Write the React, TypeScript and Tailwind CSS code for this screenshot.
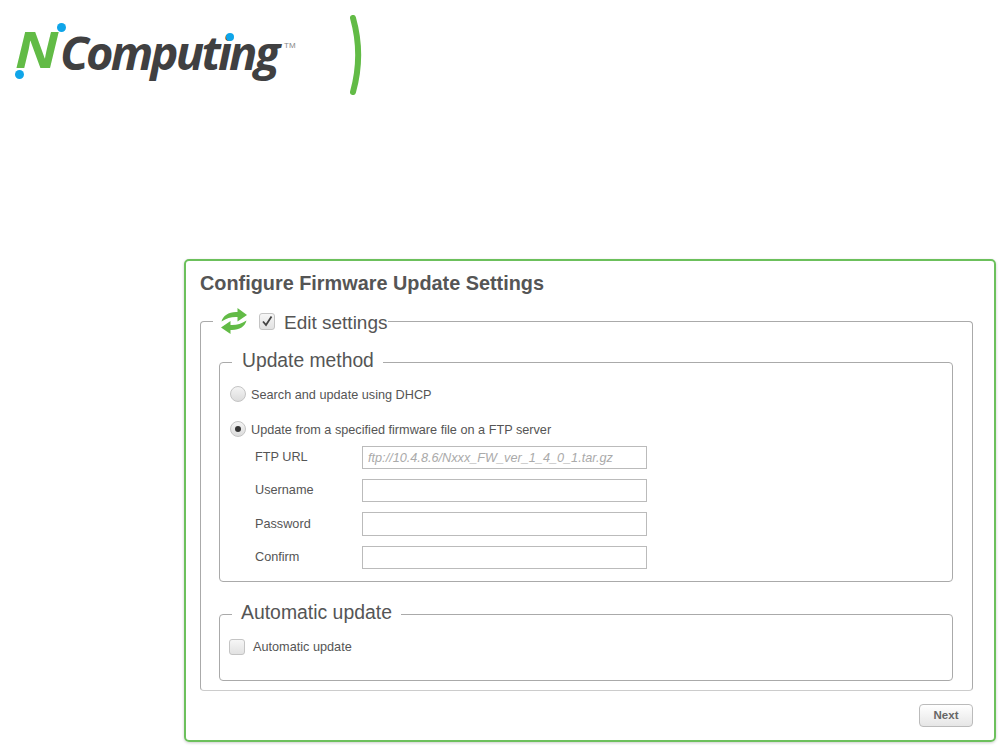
import React from 'react';

const fields = [
  { label: 'FTP URL', placeholder: 'ftp://10.4.8.6/Nxxx_FW_ver_1_4_0_1.tar.gz', height: 'h-[23px]' },
  { label: 'Username', placeholder: '', height: 'h-[23px]' },
  { label: 'Password', placeholder: '', height: 'h-[24px]' },
  { label: 'Confirm', placeholder: '', height: 'h-[23px]' },
];

function Logo() {
  return (
    <div className="relative w-[340px] h-[100px] shrink-0">
      <span className="absolute left-[15px] top-[19px] origin-left scale-x-[1.15] text-[#62bb46] text-[50px] leading-[60px] font-bold italic font-['Open_Sans',sans-serif]">N</span>
      <span className="absolute left-[60px] top-[17px] text-[#404041] text-[47px] leading-[70px] font-bold italic tracking-[-2.75px] font-['Open_Sans',sans-serif]">Computing</span>
      <span className="absolute left-[284px] top-[41px] text-[#888] text-[8px] leading-[10px] font-['Liberation_Sans',sans-serif]">TM</span>
      <span className="absolute left-[57px] top-[23px] w-[9px] h-[9px] rounded-full bg-[#0fa5e9]" />
      <span className="absolute left-[15px] top-[70px] w-[9px] h-[9px] rounded-full bg-[#0fa5e9]" />
      <span className="absolute left-[226px] top-[33px] w-[8px] h-[8px] rounded-full bg-[#0fa5e9]" />
    </div>
  );
}

function SyncIcon() {
  return (
    <svg className="w-[26px] h-[26px] shrink-0" viewBox="0 0 26 26" fill="#62bb46">
      <path d="M0.5 13.5C2 7.5 8 3.5 16.5 4V0L26 7L16.5 13.5V9C11 8.6 6 10 0.5 13.5Z" />
      <path d="M25.5 12.5C24 18.5 18 22.5 9.5 22V26L0 19.5L9.5 13V17C15 17.4 20 16 25.5 12.5Z" />
    </svg>
  );
}

function Radio({ checked }: { checked?: boolean }) {
  return (
    <span className="w-4 h-4 rounded-full border border-[#c4c4c4] bg-gradient-to-b from-[#f4f4f4] to-[#dcdcdc] flex items-center justify-center shrink-0">
      {checked && <span className="w-[6px] h-[6px] rounded-full bg-[#333]" />}
    </span>
  );
}

function Box({ checked, className }: { checked?: boolean; className: string }) {
  return (
    <span className={`rounded-[3px] border border-[#c4c4c4] bg-gradient-to-b from-[#f6f6f6] to-[#e2e2e2] flex items-center justify-center shrink-0 ${className}`}>
      {checked && (
        <svg className="w-[12px] h-[12px]" viewBox="0 0 12 12" fill="none" stroke="#444" strokeWidth="1.8">
          <path d="M2 6.5L5 10L10.5 1.5" />
        </svg>
      )}
    </span>
  );
}

export default function App() {
  return (
    <div className="w-[999px] h-[753px] bg-white overflow-hidden text-[#555] font-['Liberation_Sans',Arial,sans-serif]">
      <div className="h-[259px] flex items-start">
        <Logo />
        <svg className="w-[14px] h-[80px] mt-[15px] ml-[10px]" viewBox="0 0 14 80" fill="none" stroke="#62bb46" strokeWidth="6" strokeLinecap="round">
          <path d="M3 3C10 28 10 52 3 77" />
        </svg>
      </div>

      <div className="ml-[184px] w-[812px] h-[483px] border-2 border-[#6cc05c] rounded-[5px] shadow-[0_1px_3px_rgba(0,0,0,0.2)] px-[14px]">
        <h1 className="h-[47px] pt-[8px] text-[19.85px] leading-[28px] font-bold text-[#555]">Configure Firmware Update Settings</h1>

        <fieldset className="w-[773px] border border-[#aaa] border-b-[#ccc] rounded-[4px] pb-[9px]">
          <legend className="ml-[12px] pl-[8px] h-[26px] flex items-center">
            <SyncIcon />
            <span className="ml-[12px]">
              <Box checked className="w-[16px] h-[17px]" />
            </span>
            <span className="ml-[9px] mt-[4px] text-[19px] leading-[26px] text-[#555]">Edit settings</span>
          </legend>

          <fieldset className="mt-[15px] ml-[18px] mr-[19px] border border-[#aaa] rounded-[4px] pb-[12px]">
            <legend className="ml-[12px] pl-[10px] pr-[9px] h-[26px] text-[19.3px] leading-[24px] text-[#555]">Update method</legend>
            <div className="h-4 mt-[11px] ml-[10px] flex items-center gap-[5px] text-[12.7px] leading-4">
              <Radio />
              <span className="mt-[2px]">Search and update using DHCP</span>
            </div>
            <div className="h-4 mt-[19px] ml-[10px] flex items-center gap-[5px] text-[12.7px] leading-4">
              <Radio checked />
              <span className="mt-[2px]">Update from a specified firmware file on a FTP server</span>
            </div>
            <div className="mt-[9px] ml-[35px] flex flex-col gap-[10px]">
              {fields.map((f) => (
                <div key={f.label} className="flex items-center">
                  <label className="w-[107px] text-[12.7px] pt-[1px]">{f.label}</label>
                  <input
                    type="text"
                    placeholder={f.placeholder}
                    className={`w-[285px] ${f.height} border border-[#bbb] px-[5px] text-[12.7px] italic bg-white outline-none placeholder:text-[#aaa]`}
                  />
                </div>
              ))}
            </div>
          </fieldset>

          <fieldset className="mt-[19px] ml-[18px] mr-[19px] border border-[#aaa] rounded-[4px] pb-[25px]">
            <legend className="ml-[12px] px-[9px] h-[26px] text-[19.4px] leading-[22px] text-[#555]">Automatic update</legend>
            <div className="mt-[12px] ml-[9px] flex items-center gap-[8px] text-[12.7px] leading-4">
              <Box className="w-[16px] h-[16px]" />
              <span>Automatic update</span>
            </div>
          </fieldset>
        </fieldset>

        <div className="mt-[13px] flex justify-end w-[773px]">
          <button className="w-[54px] h-[23px] rounded-[4px] border border-[#bbb] bg-gradient-to-b from-white to-[#e6e6e6] text-[11.5px] font-bold text-[#666]">Next</button>
        </div>
      </div>
    </div>
  );
}
